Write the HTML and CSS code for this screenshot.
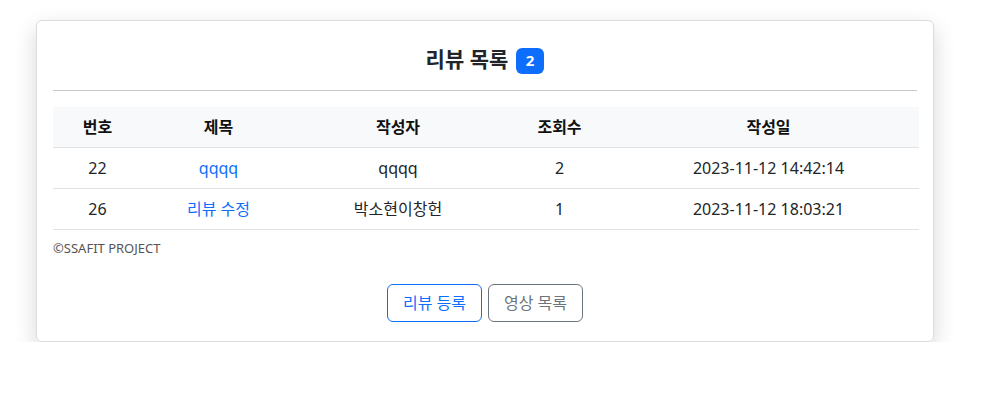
FILE: index.html
```html
<!DOCTYPE html>
<html lang="ko">
<head>
<meta charset="utf-8">
<title>리뷰 목록</title>
<link rel="stylesheet" href="styles.css">
</head>
<body>
<div class="card">
  <h5 class="title">리뷰 목록 <span class="badge">2</span></h5>
  <hr class="rule">
  <table class="table">
    <colgroup>
      <col class="c1"><col class="c2"><col class="c3"><col class="c4"><col class="c5">
    </colgroup>
    <thead>
      <tr><th>번호</th><th>제목</th><th>작성자</th><th>조회수</th><th>작성일</th></tr>
    </thead>
    <tbody>
      <tr><td>22</td><td><a class="link" href="#">qqqq</a></td><td>qqqq</td><td>2</td><td>2023-11-12 14:42:14</td></tr>
      <tr><td>26</td><td><a class="link" href="#">리뷰 수정</a></td><td>박소현이창헌</td><td>1</td><td>2023-11-12 18:03:21</td></tr>
    </tbody>
  </table>
  <div class="footer">©SSAFIT PROJECT</div>
  <div class="actions">
    <button class="btn btn-primary-outline">리뷰 등록</button>
    <button class="btn btn-secondary-outline">영상 목록</button>
  </div>
</div>
</body>
</html>
```
FILE: styles.css
```css
* { box-sizing: border-box; }
body {
  margin: 0;
  font-family: "Noto Sans", "Noto Sans CJK KR", sans-serif;
  color: #212529;
  background: #fff;
}
.card {
  margin: 20px 0 0 36px;
  width: 898px;
  border: 1px solid #dcdcdc;
  border-radius: 6px;
  padding: 0 16px 19px;
  box-shadow: 0 8px 22px rgba(0,0,0,0.16);
}
.title {
  margin: 0;
  padding-top: 26px;
  height: 69px;
  font-size: 21px;
  font-weight: 700;
  line-height: 24px;
  text-align: center;
}
.badge {
  display: inline-block;
  vertical-align: 1px;
  margin-left: 2px;
  background: #0d6efd;
  color: #fff;
  font-size: 15px;
  font-weight: 700;
  line-height: 1;
  padding: 5px 10px 6px;
  border-radius: 6px;
}
.rule {
  margin: 0 0 16px;
  border: 0;
  border-top: 1px solid #c9c9c9;
}
.table {
  width: 100%;
  border-collapse: collapse;
  table-layout: fixed;
  font-size: 16px;
}
.c1 { width: 89px; }
.c2 { width: 153px; }
.c3 { width: 206px; }
.c4 { width: 117px; }
.c5 { width: 301px; }
.table th, .table td {
  text-align: center;
  padding: 8px;
  line-height: 24px;
  border-bottom: 1px solid #dee2e6;
}
.table th {
  background: #f8f9fa;
  font-weight: 700;
  color: #111;
}
.link { color: #0d6efd; text-decoration: none; }
.footer {
  margin-top: 9px;
  font-size: 13px;
  line-height: 18px;
  color: #555;
}
.actions {
  margin-top: 27px;
  display: flex;
  justify-content: center;
  gap: 6px;
}
.btn {
  font-family: inherit;
  font-size: 16px;
  line-height: 24px;
  padding: 6px 15px;
  background: #fff;
  border-radius: 6px;
  border: 1px solid;
}
.btn-primary-outline { color: #0d6efd; border-color: #0d6efd; }
.btn-secondary-outline { color: #6c757d; border-color: #6c757d; }
```
